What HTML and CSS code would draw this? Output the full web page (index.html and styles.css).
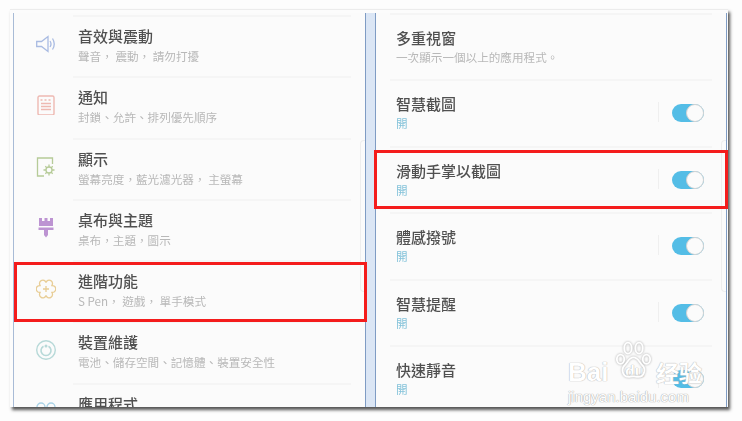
FILE: index.html
```html
<!DOCTYPE html>
<html lang="zh-Hant">
<head>
<meta charset="utf-8">
<title>設定</title>
<link rel="stylesheet" href="styles.css">
</head>
<body>
<div class="frame">
  <section class="panel panel-left">
    <div class="list">
      <div class="row">
        <svg class="icon" viewBox="0 0 20 20" fill="none" stroke="#a9bbe2" stroke-width="1.300"><path d="M.7 7.500h4.800L12 2.500v15l-6.500-5H.7z"/><path d="M14 7q2 3 0 6M16.500 4.500q3.500 5.500 0 11"/></svg>
        <div class="body"><div class="title">音效與震動</div><div class="sub">聲音， 震動， 請勿打擾</div></div>
      </div>
      <div class="row">
        <svg class="icon" viewBox="0 0 20 20" fill="none" stroke="#eeb9b2" stroke-width="1.400"><rect x="2" y="1" width="16" height="19" rx="1.500"/><path d="M5 8.500h10M5 11.500h10M5 14.500h10"/><path d="M4.500 5h2M8.500 5h2M12.500 5h2"/></svg>
        <div class="body"><div class="title">通知</div><div class="sub">封鎖、允許、排列優先順序</div></div>
      </div>
      <div class="row">
        <svg class="icon" viewBox="0 0 20 20" fill="none" stroke="#b6cb98" stroke-width="1.300"><path d="M8 19H1.500V1h15v6"/><circle cx="13" cy="13" r="3"/><path d="M13 7.500v2.500M13 16v2.500M7.500 13H10M16 13h2.500M9.300 9.300L11 11M15 15l1.700 1.700M9.300 16.700L11 15M15 11l1.700-1.700"/></svg>
        <div class="body"><div class="title">顯示</div><div class="sub">螢幕亮度，藍光濾光器， 主螢幕</div></div>
      </div>
      <div class="row">
        <svg class="icon" viewBox="0 0 20 20" fill="#bd94d2"><path d="M3 0h3v3h2.500V0h3v3H14V0h3v8H3z"/><path d="M2.500 9.500h15V12h-15z"/><path d="M8 12h4v5l-2 2.500L8 17z"/></svg>
        <div class="body"><div class="title">桌布與主題</div><div class="sub">桌布，主題，圖示</div></div>
      </div>
      <div class="row">
        <svg class="icon" viewBox="0 0 20 20" fill="none" stroke="#e8cd95" stroke-width="1.300"><path d="M10 3.700A3.300 3.300 0 1 1 15.500 6.850A3.300 3.300 0 1 1 15.500 13.150A3.300 3.300 0 1 1 10 16.300A3.300 3.300 0 1 1 4.500 13.150A3.300 3.300 0 1 1 4.500 6.850A3.300 3.300 0 1 1 10 3.700z"/><path d="M10 7v6M7 10h6"/></svg>
        <div class="body"><div class="title">進階功能</div><div class="sub">S Pen， 遊戲， 單手模式</div></div>
      </div>
      <div class="row">
        <svg class="icon" viewBox="0 0 20 20" fill="none" stroke="#b7d9d8" stroke-width="1.400"><circle cx="10" cy="10" r="9.300"/><path d="M7.500 6.200a5 5 0 1 0 5 0" stroke-width="1.600"/><circle cx="10" cy="6" r=".8"/></svg>
        <div class="body"><div class="title">裝置維護</div><div class="sub">電池、儲存空間、記憶體、裝置安全性</div></div>
      </div>
      <div class="row">
        <svg class="icon" viewBox="0 0 20 20" fill="none" stroke="#a9d2e6" stroke-width="1.300"><circle cx="5" cy="5" r="4"/><circle cx="15" cy="5" r="4"/><circle cx="5" cy="15" r="4"/><circle cx="15" cy="15" r="4"/></svg>
        <div class="body"><div class="title">應用程式</div></div>
      </div>
    </div>
    <div class="scroll scroll-left"></div>
  </section>
  <div class="gutter"></div>
  <section class="panel panel-right">
    <div class="list">
      <div class="row row-tall">
        <div class="body"><div class="title">多重視窗</div><div class="sub">一次顯示一個以上的應用程式。</div></div>
      </div>
      <div class="row row-tall">
        <div class="body"><div class="title">智慧截圖</div><div class="on">開</div></div>
        <div class="divider"></div><div class="toggle"><span class="thumb"></span></div>
      </div>
      <div class="row row-tall">
        <div class="body"><div class="title">滑動手掌以截圖</div><div class="on">開</div></div>
        <div class="divider"></div><div class="toggle"><span class="thumb"></span></div>
      </div>
      <div class="row row-tall">
        <div class="body"><div class="title">體感撥號</div><div class="on">開</div></div>
        <div class="divider"></div><div class="toggle"><span class="thumb"></span></div>
      </div>
      <div class="row row-tall">
        <div class="body"><div class="title">智慧提醒</div><div class="on">開</div></div>
        <div class="divider"></div><div class="toggle"><span class="thumb"></span></div>
      </div>
      <div class="row row-tall">
        <div class="body"><div class="title">快速靜音</div><div class="on">開</div></div>
        <div class="divider"></div><div class="toggle"><span class="thumb"></span></div>
      </div>
    </div>
    <div class="scroll scroll-right"></div>
  </section>
  <div class="mark mark-left"></div>
  <div class="mark mark-right"></div>
  <div class="baidu">
    <svg class="paw" viewBox="0 0 40 44" fill="none" stroke="#fff" stroke-width="2"><ellipse cx="6" cy="19" rx="4" ry="5"/><ellipse cx="14" cy="7" rx="4" ry="6"/><ellipse cx="26" cy="7" rx="4" ry="6"/><ellipse cx="34" cy="19" rx="4" ry="5"/><path d="M20 17c-5 0-6 5-10 9-4 5-1 13 6 12 3-.5 5-1 8 0 7 1 10-7 6-12-4-4-5-9-10-9z"/></svg>
    <div class="brand"><span class="bai">Bai</span><span class="du">du</span><span class="jy">经验</span></div>
    <div class="url">jingyan.baidu.com</div>
  </div>
</div>
</body>
</html>
```

FILE: styles.css
```css
html, body {
  margin: 0;
  padding: 0;
  background: #fdfdfd;
  overflow: hidden;
}

body {
  width: 742px;
  height: 421px;
  font-family: "Noto Sans CJK TC", "Noto Sans", sans-serif;
}

.frame {
  position: relative;
  display: flex;
  box-sizing: border-box;
  width: 718px;
  height: 398px;
  margin: 9px 0 0 10px;
  padding: 3px 0 0 3px;
  background: #fcfcfc;
  border-top: 1px solid #ececec;
  box-shadow: 2px 3px 3px #555;
}

.panel {
  position: relative;
  box-sizing: border-box;
  width: 352px;
  height: 394px;
  overflow: hidden;
  background: #fbfbfb;
}

.panel-left {
  border-left: 1px solid #a8bbd6;
  flex: none;
}

.panel-right {
  flex: none;
  border-left: 1px solid #7f9cc4;
  border-right: 1px solid #7f9cc4;
}

.gutter {
  flex: none;
  box-sizing: border-box;
  width: 10px;
  background: #dbe6f5;
  border-left: 1px solid #7f9cc4;
}

.list {
  filter: blur(0.55px);
}

.panel-left .list {
  padding-top: 2px;
}

.row {
  display: flex;
  align-items: stretch;
  height: 61.3px;
}

.row-tall {
  position: relative;
  height: 66.4px;
  margin-left: 14px;
}

.icon {
  flex: none;
  width: 20px;
  height: 20px;
  margin: 19px 17px 0 22px;
}

.body {
  flex: 1;
  box-sizing: border-box;
  margin-right: 14px;
  padding: 9px 0 0 5px;
  border-top: 2px solid #f5f5f5;
}

.row-tall .body {
  margin-right: 14px;
  padding: 13px 0 0 6px;
}

.title {
  font-size: 15px;
  line-height: 20px;
  font-weight: 500;
  color: #505050;
}

.sub {
  margin-top: 2px;
  font-size: 11.6px;
  line-height: 16px;
  color: #b8b8b8;
}

.row-tall .sub,
.on {
  margin-top: 1px;
}

.on {
  font-size: 11.6px;
  line-height: 16px;
  color: #85c3da;
}

.divider {
  position: absolute;
  top: 23px;
  left: 268px;
  width: 1px;
  height: 20px;
  background: #efefef;
}

.toggle {
  position: absolute;
  top: 25px;
  left: 282px;
  width: 32px;
  height: 18px;
  border-radius: 9px;
  background: #54bde6;
}

.thumb {
  position: absolute;
  top: 0;
  right: 0;
  box-sizing: border-box;
  width: 18px;
  height: 18px;
  border-radius: 50%;
  background: #fbfbfb;
  border: 1px solid #d2d2d2;
}

.scroll {
  position: absolute;
  right: 0;
  width: 4px;
  border: 1px solid #eeeeee;
  border-right: 0;
  border-radius: 4px 0 0 4px;
}

.scroll-left,
.scroll-right {
  top: 127px;
  height: 150px;
}

.mark {
  position: absolute;
  box-sizing: border-box;
  border: 3px solid #f41c1c;
  pointer-events: none;
}

.mark-left {
  top: 252px;
  left: 4px;
  width: 353px;
  height: 60px;
}

.mark-right {
  top: 140px;
  left: 364px;
  width: 354px;
  height: 59px;
}

.baidu {
  position: absolute;
  top: 331px;
  left: 558px;
  width: 136px;
  color: #fff;
}

.paw {
  position: absolute;
  top: 0;
  left: 47px;
  width: 37px;
  height: 42px;
  filter: drop-shadow(0 0 1px #a8a8a8);
}

.brand {
  display: flex;
  align-items: center;
  height: 26px;
  margin-top: 18px;
  font-family: "Liberation Sans", "Noto Sans CJK SC", sans-serif;
  font-weight: 700;
  color: #fff;
  text-shadow: 0 0 1px #b5b5b5, 0 0 1px #b5b5b5;
  white-space: nowrap;
}

.bai {
  width: 57px;
  font-size: 26px;
}

.du {
  width: 31px;
  font-size: 16px;
}

.jy {
  font-size: 23px;
}

.url {
  margin-top: 4px;
  font-family: "Liberation Sans", sans-serif;
  font-size: 15px;
  line-height: 16px;
  color: #fff;
  text-shadow: 0 0 1px #a5a5a5, 0 0 1px #a5a5a5;
  white-space: nowrap;
}
```
